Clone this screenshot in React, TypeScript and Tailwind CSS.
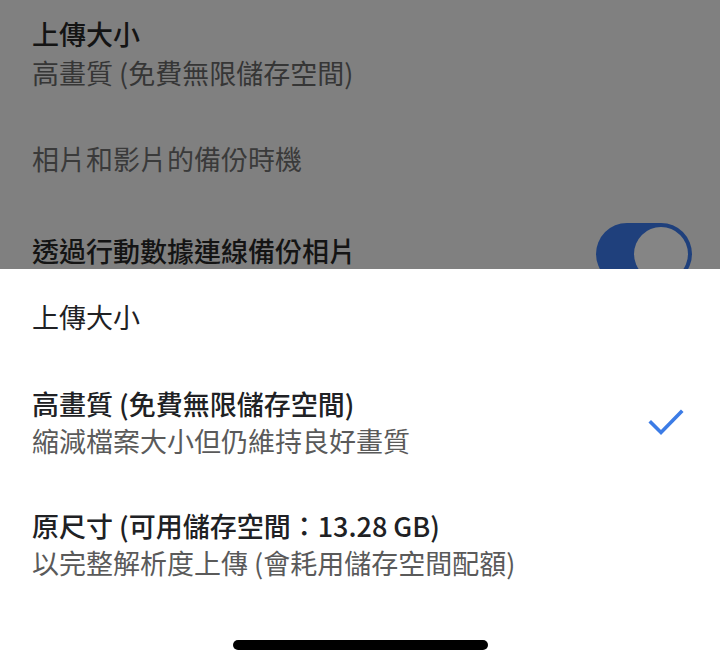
import React from 'react';

const font = { fontFamily: '"Noto Sans CJK TC", "Noto Sans", sans-serif' };

// Dimmed settings page behind the sheet
const Background: React.FC = () => (
    <div className="h-[269px] shrink-0 bg-[#808080] overflow-hidden px-8 pt-[14px]">
        <div className="text-[27px] leading-[39px] font-medium text-[#141414]">上傳大小</div>
        <div className="text-[27px] leading-[39px] text-[#363636]">高畫質 (免費無限儲存空間)</div>
        <div className="mt-[47px] text-[27px] leading-[39px] text-[#3a3a3a]">相片和影片的備份時機</div>
        <div className="mt-[53px] flex items-start justify-between">
            <div className="text-[27px] leading-[39px] font-medium text-[#141414]">透過行動數據連線備份相片</div>
            {/* toggle, cut off by the sheet */}
            <div className="-mt-[8px] mr-[-4px] w-[96px] h-[62px] rounded-full bg-[#1f407c] flex items-center justify-end pr-[4px]">
                <div className="w-[54px] h-[54px] rounded-full bg-[#858585]" />
            </div>
        </div>
    </div>
);

const Option: React.FC<{ title: string; desc: string; checked?: boolean }> = ({ title, desc, checked }) => (
    <div className="flex items-center justify-between">
        <div>
            <div className="text-[27px] leading-[37px] font-medium text-[#202124]">{title}</div>
            <div className="text-[27px] leading-[38px] text-[#5a5a5a]">{desc}</div>
        </div>
        {checked && (
            <svg width="36" height="28" viewBox="0 0 36 28" className="mr-[4px]">
                <path d="M3 13.5 L13 23.5 L33 3" fill="none" stroke="#3c7ce6" strokeWidth="3.6" strokeLinecap="square" />
            </svg>
        )}
    </div>
);

export default function App() {
    return (
        <div className="w-[720px] h-[666px] flex flex-col bg-white overflow-hidden" style={font}>
            <Background />
            <div className="flex-1 flex flex-col px-8 pt-[29px]">
                <div className="text-[27px] leading-[37px] text-[#202124]">上傳大小</div>
                <div className="mt-[50px]">
                    <Option title="高畫質 (免費無限儲存空間)" desc="縮減檔案大小但仍維持良好畫質" checked />
                </div>
                <div className="mt-[47px]">
                    <Option title="原尺寸 (可用儲存空間：13.28 GB)" desc="以完整解析度上傳 (會耗用儲存空間配額)" />
                </div>
                <div className="mt-auto mb-[16px] flex justify-center">
                    <div className="w-[255px] h-[10px] rounded-full bg-black" />
                </div>
            </div>
        </div>
    );
}
